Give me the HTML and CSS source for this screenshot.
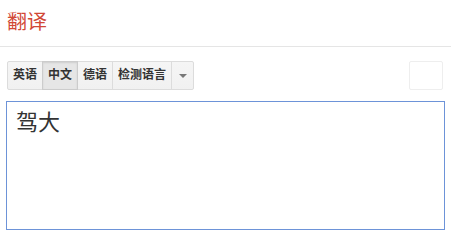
FILE: index.html
```html
<!DOCTYPE html>
<html>
<head>
    <title>翻译</title>
    <meta charset="UTF-8">
    <link rel="stylesheet" href="styles.css">
</head>
<body>
    <div class="header">
        <div class="title">翻译</div>
    </div>

    <div class="toolbar">
        <div class="lang-group">
            <div class="lang-btn">英语</div>
            <div class="lang-btn selected">中文</div>
            <div class="lang-btn">德语</div>
            <div class="lang-btn">检测语言</div>
            <div class="lang-btn dropdown"><span class="arrow"></span></div>
        </div>
        <div class="side-box"></div>
    </div>

    <div class="source-box">驾大</div>
</body>
</html>
```

FILE: styles.css
```css
body {
    margin: 0;
    font-family: Arial, "Noto Sans CJK SC", sans-serif;
    background: #fff;
}

.header {
    height: 46px;
    border-bottom: 1px solid #e5e5e5;
    padding-left: 7px;
    display: flex;
    align-items: center;
}

.title {
    font-size: 20px;
    color: #d14836;
    margin-top: -6px;
}

.toolbar {
    display: flex;
    justify-content: space-between;
    align-items: flex-start;
    margin: 14px 7px 0 7px;
}

.lang-group {
    display: flex;
}

.lang-btn {
    height: 27px;
    line-height: 27px;
    padding: 0 5px;
    border: 1px solid #dcdcdc;
    margin-left: -1px;
    background: linear-gradient(#f5f5f5, #f1f1f1);
    font-size: 12px;
    font-weight: bold;
    color: #333;
}

.lang-btn:first-child {
    margin-left: 0;
    border-radius: 2px 0 0 2px;
}

.lang-btn.selected {
    background: #e6e6e6;
    border-color: #ccc;
    box-shadow: inset 0 1px 2px rgba(0,0,0,0.1);
    position: relative;
}

.lang-btn.dropdown {
    width: 11px;
    border-radius: 0 2px 2px 0;
    display: flex;
    align-items: center;
    justify-content: center;
}

.arrow {
    width: 0;
    height: 0;
    border-left: 4px solid transparent;
    border-right: 4px solid transparent;
    border-top: 4px solid #777;
}

.side-box {
    width: 32px;
    height: 27px;
    border: 1px solid #eee;
    border-radius: 2px;
    margin-right: 1px;
}

.source-box {
    margin: 11px 6px 0 6px;
    height: 115px;
    border: 1px solid #6d93d8;
    padding: 6px 9px;
    font-size: 22px;
    color: #333;
    line-height: 30px;
}
```
